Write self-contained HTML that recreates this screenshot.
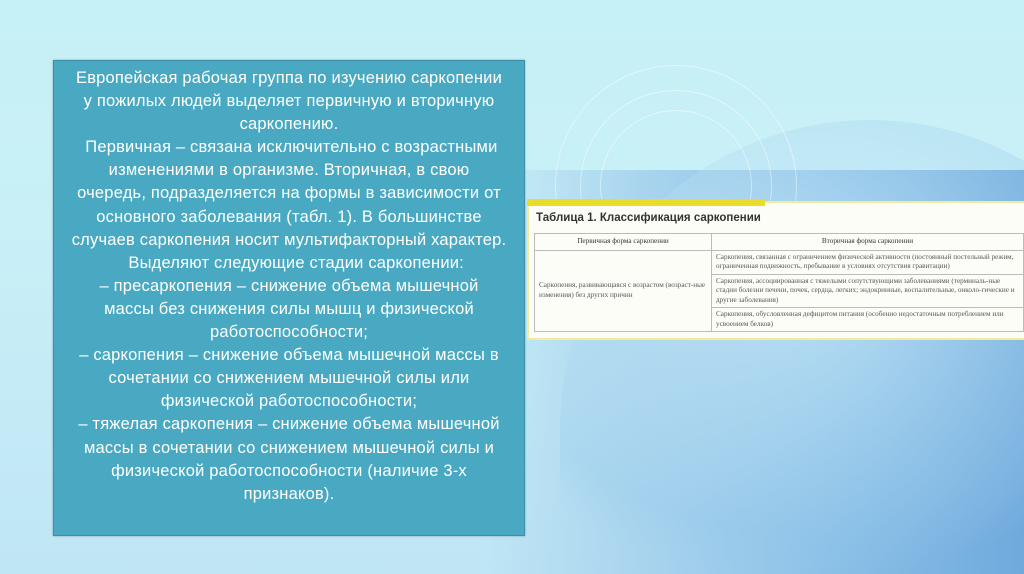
<!DOCTYPE html>
<html><head><meta charset="utf-8"><style>
html,body{margin:0;padding:0;width:1024px;height:574px;overflow:hidden}
body{font-family:"Liberation Sans",sans-serif}
.wrap{position:relative;width:1024px;height:574px;overflow:hidden;background:linear-gradient(180deg,#c6f1f6 0%,#c9eff7 40%,#bfe6f5 100%);}
.band{position:absolute;left:480px;top:170px;width:544px;height:404px;
background:linear-gradient(90deg,rgba(190,230,245,0) 0%,#a9d4ee 30%,#86bde6 70%,#6fa9dc 100%);}
.head{position:absolute;left:560px;top:120px;width:620px;height:454px;border-radius:310px 310px 0 0;
background:radial-gradient(ellipse at 40% 40%,rgba(210,240,250,0.6),rgba(150,200,235,0.3) 60%,rgba(120,180,225,0) 72%);}
.ring{position:absolute;border:1.5px solid rgba(255,255,255,0.45);border-radius:50%}
.box{position:absolute;left:53px;top:60px;width:472px;height:476px;background:#4aa9c2;border:1px solid #3b8fa6;
box-shadow:0 0 2px rgba(0,0,0,.3);color:#fff;text-align:center;font-size:16.5px;letter-spacing:0.2px;line-height:23.1px;padding-top:6px;box-sizing:border-box}
.box div{white-space:nowrap}
.tbl{position:absolute;left:527px;top:201px;width:497px;height:139px;background:#fdfdf8;border:2px solid #f3eaa0;border-right:none;box-sizing:border-box}
.ybar{position:absolute;left:527px;top:199px;width:238px;height:7px;background:#ecdc2a}
.title{position:absolute;left:7px;top:9px;font-size:11.5px;font-weight:bold;color:#333}
table{position:absolute;left:5px;top:30px;width:490px;border-collapse:collapse;font-family:"Liberation Serif",serif;font-size:7.2px;color:#555;line-height:9.5px}
td{border:1px solid #bbb;padding:2px 4px;vertical-align:top}
th{border:1px solid #bbb;font-weight:normal;font-size:7.2px;padding:3px;color:#333;text-align:center}
</style></head><body><div class="wrap">
<div class="band"></div>
<div class="head"></div>
<div class="ring" style="left:600px;top:110px;width:150px;height:150px"></div>
<div class="ring" style="left:580px;top:90px;width:190px;height:190px"></div>
<div class="ring" style="left:555px;top:65px;width:240px;height:240px"></div>
<div class="box">
<div>Европейская рабочая группа по изучению саркопении</div>
<div>у пожилых людей выделяет первичную и вторичную</div>
<div>саркопению.</div>
<div>&nbsp;Первичная – связана исключительно с возрастными</div>
<div>изменениями в организме. Вторичная, в свою</div>
<div>очередь, подразделяется на формы в зависимости от</div>
<div>основного заболевания (табл. 1). В большинстве</div>
<div>случаев саркопения носит мультифакторный характер.</div>
<div>&nbsp;&nbsp;&nbsp;Выделяют следующие стадии саркопении:</div>
<div>– пресаркопения – снижение объема мышечной</div>
<div>массы без снижения силы мышц и физической</div>
<div>работоспособности;</div>
<div>– саркопения – снижение объема мышечной массы в</div>
<div>сочетании со снижением мышечной силы или</div>
<div>физической работоспособности;</div>
<div>– тяжелая саркопения – снижение объема мышечной</div>
<div>массы в сочетании со снижением мышечной силы и</div>
<div>физической работоспособности (наличие 3-х</div>
<div>признаков).</div>
</div>
<div class="tbl">
<div class="title">Таблица 1. Классификация саркопении</div>
<table>
<tr><th style="width:170px">Первичная форма саркопении</th><th>Вторичная форма саркопении</th></tr>
<tr><td rowspan="3" style="vertical-align:middle">Саркопения, развивающаяся с возрастом (возраст-ные изменения) без других причин</td>
<td>Саркопения, связанная с ограничением физической активности (постоянный постельный режим, ограниченная подвижность, пребывание в условиях отсутствия гравитации)</td></tr>
<tr><td>Саркопения, ассоциированная с тяжелыми сопутствующими заболеваниями (терминаль-ные стадии болезни печени, почек, сердца, легких; эндокринные, воспалительные, онколо-гические и другие заболевания)</td></tr>
<tr><td>Саркопения, обусловленная дефицитом питания (особенно недостаточным потреблением или усвоением белков)</td></tr>
</table>
</div>
<div class="ybar"></div>
</div></body></html>
